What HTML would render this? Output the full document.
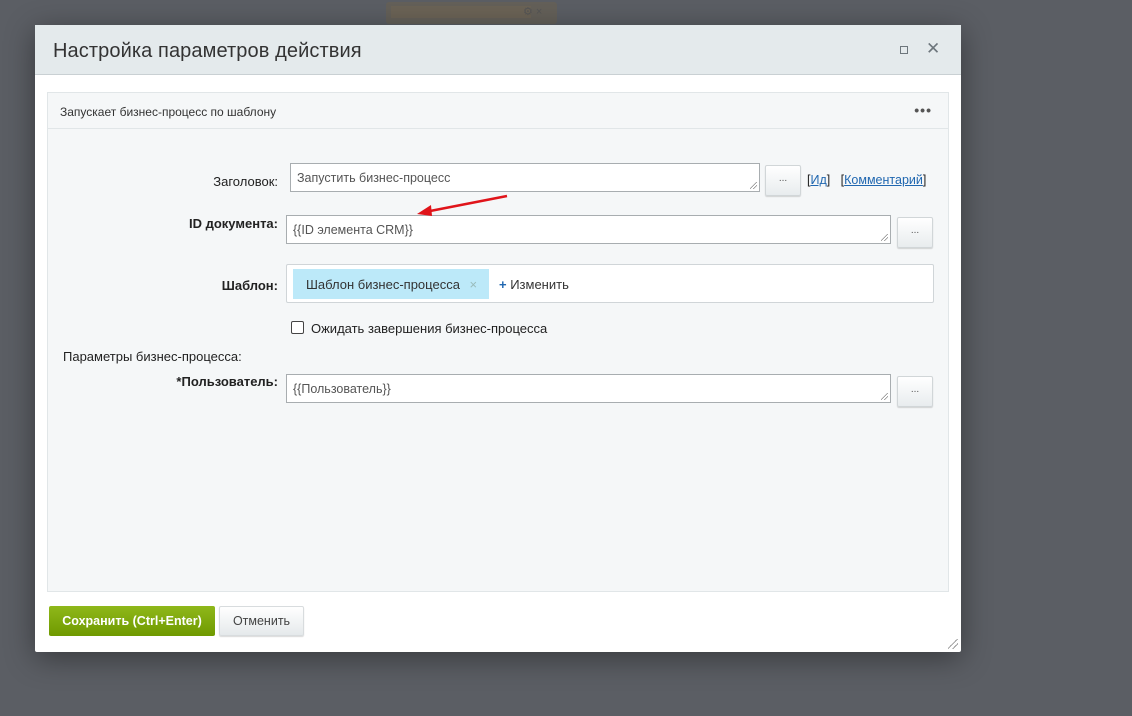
<!DOCTYPE html>
<html><head><meta charset="utf-8"><style>
*{box-sizing:border-box;margin:0;padding:0}
body{width:1132px;height:716px;background:#5b5e64;font-family:"Liberation Sans","DejaVu Sans",sans-serif;position:relative;overflow:hidden;color:#333}
.ghost{position:absolute;left:386px;top:2px;width:171px;height:22px;background:#646059;border-radius:3px}
.ghost:before{content:"";position:absolute;left:5px;top:4px;width:140px;height:12px;background:#6b6356}
.ghost:after{content:"⚙ ×";position:absolute;left:137px;top:3px;font-size:11px;color:#555}
.dlg{position:absolute;left:35px;top:25px;width:926px;height:627px;background:#fff;border-radius:2px;box-shadow:0 6px 30px rgba(0,0,0,.4)}
.hd{height:50px;background:#e4eaec;border-bottom:1px solid #c9d0d3;position:relative}
.hd h1{font-weight:normal;font-size:20px;color:#333;position:absolute;left:18px;top:15px;letter-spacing:.1px}
.mx{position:absolute;left:865px;top:21px;width:8px;height:8px;border:1.5px solid #6d767c}
.cl{position:absolute;left:891px;top:14px;font-size:17px;color:#6d767c}
.pn{position:absolute;left:12px;top:67px;width:902px;height:500px;background:#f5f7f8;border:1px solid #e1e6e8}
.ph{height:36px;border-bottom:1px solid #e1e6e8;font-size:12px;padding:12px 0 0 12px;color:#333;position:relative}
.dots{position:absolute;right:16px;top:9px;font-size:14px;letter-spacing:1px;color:#555;font-weight:bold}
.lbl{position:absolute;font-size:13px;color:#222;text-align:right}
.b{font-weight:bold}
.inp{position:absolute;background:#fff;border:1px solid #a8adb0;font-size:12.5px;padding:7px 6px;color:#555}
.inp:after{content:"";position:absolute;right:2px;bottom:2px;width:7px;height:7px;background:linear-gradient(135deg,transparent 45%,#888 45%,#888 52%,transparent 52%,transparent 70%,#888 70%,#888 77%,transparent 77%)}
.btn{position:absolute;width:36px;height:31px;border-radius:2px;background:linear-gradient(#fff,#e8ecee);border:1px solid #d1d6d8;box-shadow:0 1px 1px rgba(0,0,0,.15);font-size:10px;color:#555;text-align:center;line-height:26px}
a{color:#2067b0}
</style></head><body>
<div class="ghost"></div>
<div class="dlg">
<div class="hd"><h1>Настройка параметров действия</h1><div class="mx"></div><div class="cl">✕</div></div>
<div class="pn">
<div class="ph">Запускает бизнес-процесс по шаблону<span class="dots">•••</span></div>
</div>
<div class="lbl" style="left:120px;top:149px;width:123px">Заголовок:</div>
<div class="inp" style="left:255px;top:138px;width:470px;height:29px">Запустить бизнес-процесс</div>
<div class="btn" style="left:730px;top:140px">...</div>
<div class="lbl" style="left:772px;top:148px;font-size:12.5px;text-align:left">[<a href="#" style="text-decoration:underline">Ид</a>]&nbsp;&nbsp; [<a href="#" style="text-decoration:underline">Комментарий</a>]</div>
<div class="lbl b" style="left:100px;top:191px;width:143px">ID документа:</div>
<div class="inp" style="left:251px;top:190px;width:605px;height:29px">{{ID элемента CRM}}</div>
<div class="btn" style="left:862px;top:192px">...</div>
<svg style="position:absolute;left:380px;top:168px" width="95" height="24"><line x1="92" y1="3" x2="10" y2="19" stroke="#e0141a" stroke-width="2.5"/><polygon points="2,21 16,12 17,23" fill="#e0141a"/></svg>
<div class="lbl b" style="left:120px;top:253px;width:123px">Шаблон:</div>
<div style="position:absolute;left:251px;top:239px;width:648px;height:39px;background:#fff;border:1px solid #d0d5d8;border-radius:2px">
<div style="position:absolute;left:6px;top:4px;width:196px;height:30px;background:#bce9f9;font-size:13px;padding:8px 0 0 13px;color:#333">Шаблон бизнес-процесса <span style="color:#9bb;margin-left:6px">×</span></div>
<div style="position:absolute;left:212px;top:12px;font-size:13px"><b style="color:#2067b0">+</b> Изменить</div>
</div>
<div style="position:absolute;left:256px;top:296px;width:13px;height:13px;border:1px solid #444;border-radius:2px;background:#fff"></div>
<div class="lbl" style="left:276px;top:296px;text-align:left">Ожидать завершения бизнес-процесса</div>
<div class="lbl" style="left:28px;top:324px;text-align:left">Параметры бизнес-процесса:</div>
<div class="lbl b" style="left:100px;top:349px;width:143px">*Пользователь:</div>
<div class="inp" style="left:251px;top:349px;width:605px;height:29px">{{Пользователь}}</div>
<div class="btn" style="left:862px;top:351px">...</div>
<div style="position:absolute;left:14px;top:581px;width:166px;height:30px;background:linear-gradient(#8fb81a,#6f9a00);border-radius:2px;color:#fff;font-weight:bold;font-size:12.5px;text-align:center;line-height:30px">Сохранить (Ctrl+Enter)</div>
<div style="position:absolute;left:184px;top:581px;width:85px;height:30px;background:linear-gradient(#fff,#e5e9eb);border:1px solid #d8dcde;border-radius:2px;font-size:12.5px;text-align:center;line-height:28px;color:#444;box-shadow:0 1px 1px rgba(0,0,0,.15)">Отменить</div>
<div style="position:absolute;right:3px;bottom:3px;width:10px;height:10px;background:linear-gradient(135deg,transparent 45%,#999 45%,#999 52%,transparent 52%,transparent 70%,#999 70%,#999 77%,transparent 77%)"></div>
</div>
</body></html>
